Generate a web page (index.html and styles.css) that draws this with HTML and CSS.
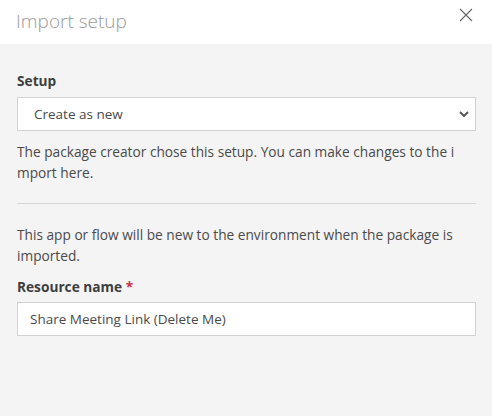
FILE: index.html
```html
<!DOCTYPE html>
<html>
<head>
<meta charset="utf-8">
<link rel="stylesheet" href="styles.css">
</head>
<body>
<div class="panel">
  <header class="header">
    <h1 class="title">Import setup</h1>
    <button class="close" aria-label="Close">
      <svg width="14" height="14" viewBox="0 0 14 14"><path d="M1 1 L13 13 M13 1 L1 13" stroke="#666" stroke-width="1.1" fill="none"/></svg>
    </button>
  </header>
  <main class="content">
    <label class="label">Setup</label>
    <select class="select">
      <option>Create as new</option>
    </select>
    <p class="text">The package creator chose this setup. You can make changes to the i<br>mport here.</p>
    <hr class="divider">
    <p class="text text-top">This app or flow will be new to the environment when the package is imported.</p>
    <label class="label label-res">Resource name <span class="req">*</span></label>
    <input class="input" type="text" value="Share Meeting Link (Delete Me)">
  </main>
</div>
</body>
</html>
```

FILE: styles.css
```css
* { box-sizing: border-box; }
html, body { margin: 0; padding: 0; }
body {
  width: 492px;
  height: 416px;
  background: #f4f4f4;
  font-family: "Open Sans", "Noto Sans", sans-serif;
  color: #4a4a4a;
  overflow: hidden;
}
.panel { display: flex; flex-direction: column; }
.header {
  height: 44px;
  background: #ffffff;
  display: flex;
  align-items: center;
  justify-content: space-between;
  padding: 0 19px 0 16px;
}
.title {
  margin: 0;
  font-size: 19px;
  font-weight: 300;
  color: #9a9a9a;
  line-height: 26px;
  padding-bottom: 2px;
}
.close {
  border: 0;
  background: none;
  padding: 0;
  width: 14px;
  height: 14px;
  margin-bottom: 14px;
  display: flex;
}
.content {
  padding: 27px 16px 0 17px;
  display: flex;
  flex-direction: column;
}
.label {
  font-weight: 700;
  font-size: 13.7px;
  line-height: 20px;
  color: #3e3e3e;
}
.req { color: #c4314b; }
.select {
  margin-top: 6px;
  height: 34px;
  width: 100%;
  border: 1px solid #d2d2d2;
  background: #ffffff url("data:image/svg+xml;utf8,<svg xmlns='http://www.w3.org/2000/svg' width='10' height='6' viewBox='0 0 10 6'><path d='M1 1 L5 5 L9 1' stroke='%23555' stroke-width='2' fill='none'/></svg>") no-repeat right 6px center;
  appearance: none;
  -webkit-appearance: none;
  font-family: inherit;
  font-size: 13.5px;
  color: #4a4a4a;
  padding: 0 0 0 16px;
  border-radius: 0;
  outline: none;
}
.text {
  margin: 10px 0 0;
  font-size: 13.7px;
  line-height: 21px;
}
.divider {
  margin: 20px 0 0;
  border: 0;
  border-top: 1px solid #d6d6d6;
  height: 0;
}
.text-top { margin-top: 20px; }
.label-res { margin-top: 11px; }
.input {
  margin-top: 5px;
  height: 34px;
  width: 100%;
  border: 1px solid #d2d2d2;
  background: #ffffff;
  font-family: inherit;
  font-size: 13.5px;
  color: #4a4a4a;
  padding: 0 12px;
  border-radius: 0;
  outline: none;
}
```
